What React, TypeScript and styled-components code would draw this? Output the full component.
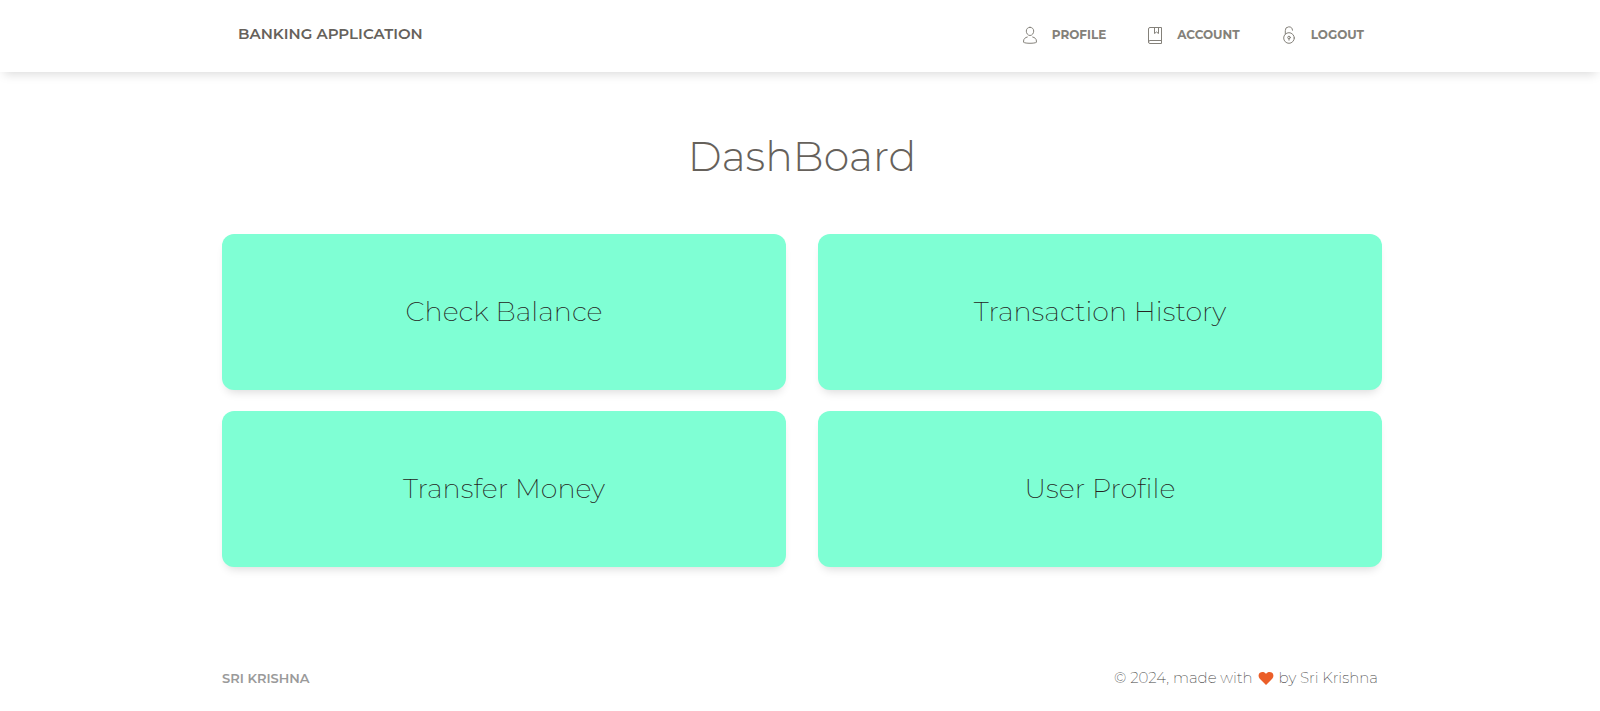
import React from "react";
import styled, { createGlobalStyle } from "styled-components";

const GlobalStyle = createGlobalStyle`
  *, *::before, *::after { box-sizing: border-box; }
  body {
    margin: 0;
    background: #fff;
    color: #66615b;
    font-family: Montserrat, Inter, "Liberation Sans", sans-serif;
  }
  a { color: inherit; text-decoration: none; }
`;

const Header = styled.header`
  background: #fff;
  box-shadow: 0 6px 10px -4px rgba(0, 0, 0, 0.15);
`;

const Container = styled.div`
  width: 100%;
  max-width: 1164px;
  margin: 0 auto;
  padding-left: 4px;
`;

const Bar = styled(Container)`
  display: flex;
  align-items: center;
  justify-content: space-between;
  flex-wrap: wrap;
  min-height: 72px;
  padding: 0 18px 2px 20px;
`;

const Brand = styled.a`
  padding-bottom: 2px;
  font-size: 15px;
  font-weight: 600;
  line-height: 24px;
`;

const NavList = styled.ul`
  display: flex;
  gap: 42px;
  margin: 0;
  padding: 0;
  list-style: none;
`;

const NavLink = styled.a`
  display: flex;
  align-items: center;
  gap: 15px;
  color: #84817a;
  font-size: 12px;
  font-weight: 700;
  line-height: 20px;
`;

const Icon = styled.svg`
  width: 14px;
  height: 18px;
  fill: none;
  stroke: #84817a;
  stroke-width: 1;
  stroke-linecap: round;
  stroke-linejoin: round;
`;

const Title = styled.h1`
  margin: 0;
  padding: 55px 0 49px;
  text-align: center;
  font-size: 41px;
  font-weight: 300;
  line-height: 58px;
`;

const CardGrid = styled.div`
  display: grid;
  grid-template-columns: repeat(auto-fit, minmax(400px, 1fr));
  gap: 21px 32px;
`;

const Card = styled.a`
  display: flex;
  align-items: center;
  justify-content: center;
  min-height: 156px;
  border-radius: 12px;
  background: #7fffd4;
  color: #252422;
  box-shadow: 0 6px 10px -4px rgba(0, 0, 0, 0.15);
  font-size: 27px;
  font-weight: 200;
  line-height: 40px;
`;

const Footer = styled.footer`
  padding: 99px 0 20px;
`;

const FooterRow = styled(Container)`
  display: flex;
  align-items: center;
  justify-content: space-between;
  flex-wrap: wrap;
  padding-right: 4px;
  line-height: 24px;
`;

const FooterLink = styled.a`
  color: #9a9a9a;
  font-size: 13px;
  font-weight: 600;
`;

const Credits = styled.p`
  display: flex;
  align-items: center;
  gap: 5px;
  margin: 0;
  color: #444;
  font-size: 15px;
  font-weight: 200;
`;

const Heart = styled.svg`
  width: 16px;
  height: 13px;
  fill: #eb5e28;
`;

const ProfileIcon = () => (
  <Icon viewBox="0 0 14 18" aria-hidden="true">
    <path d="M7 1.300c2.300 0 3.700 1.700 3.700 3.800S9.200 9.500 7 9.500 3.300 7.200 3.300 5.100 4.700 1.300 7 1.300z" />
    <path d="M4.300 11C2.100 11.500.6 12.900.6 15v1.300c1.900 1.300 10.900 1.300 12.800 0V15c0-2.100-1.500-3.500-3.700-4" />
  </Icon>
);

const AccountIcon = () => (
  <Icon viewBox="0 0 14 18" aria-hidden="true">
    <path d="M13.500 14.500V1.500H2A1.500 1.500 0 0 0 .5 3v13A1.500 1.500 0 0 0 2 17.500h11.500v-3H2A1.500 1.500 0 0 0 .5 16" />
    <path d="M6.500 1.500v6l2-1.500 2 1.500v-6" />
  </Icon>
);

const LogoutIcon = () => (
  <Icon viewBox="0 0 14 18" aria-hidden="true">
    <circle cx="7" cy="12" r="5.300" />
    <path d="M3.300 8V4.700a3.500 3.500 0 0 1 7.200-.5" />
    <circle cx="7" cy="11.500" r="1.300" />
    <path d="M7 12.800v1.400" />
  </Icon>
);

const navItems = [
  { label: "PROFILE", icon: <ProfileIcon /> },
  { label: "ACCOUNT", icon: <AccountIcon /> },
  { label: "LOGOUT", icon: <LogoutIcon /> },
];

const cards = ["Check Balance", "Transaction History", "Transfer Money", "User Profile"];

export default function App() {
  return (
    <>
      <GlobalStyle />
      <Header>
        <Bar>
          <Brand href="#">BANKING APPLICATION</Brand>
          <nav>
            <NavList>
              {navItems.map(({ label, icon }) => (
                <li key={label}>
                  <NavLink href="#">
                    {icon}
                    {label}
                  </NavLink>
                </li>
              ))}
            </NavList>
          </nav>
        </Bar>
      </Header>
      <Container as="main">
        <Title>DashBoard</Title>
        <CardGrid>
          {cards.map((card) => (
            <Card key={card} href="#">{card}</Card>
          ))}
        </CardGrid>
      </Container>
      <Footer>
        <FooterRow>
          <FooterLink href="#">SRI KRISHNA</FooterLink>
          <Credits>
            <span>© 2024, made with</span>
            <Heart viewBox="0 0 16 14" role="img" aria-label="love">
              <path d="M8 14 1.300 7.400C-.6 5.400-.3 2.300 1.500.9 3.400-.6 6.500-.2 8 2.100 9.500-.2 12.600-.6 14.500.9c1.800 1.400 2.100 4.500.2 6.500z" />
            </Heart>
            <span>by Sri Krishna</span>
          </Credits>
        </FooterRow>
      </Footer>
    </>
  );
}
